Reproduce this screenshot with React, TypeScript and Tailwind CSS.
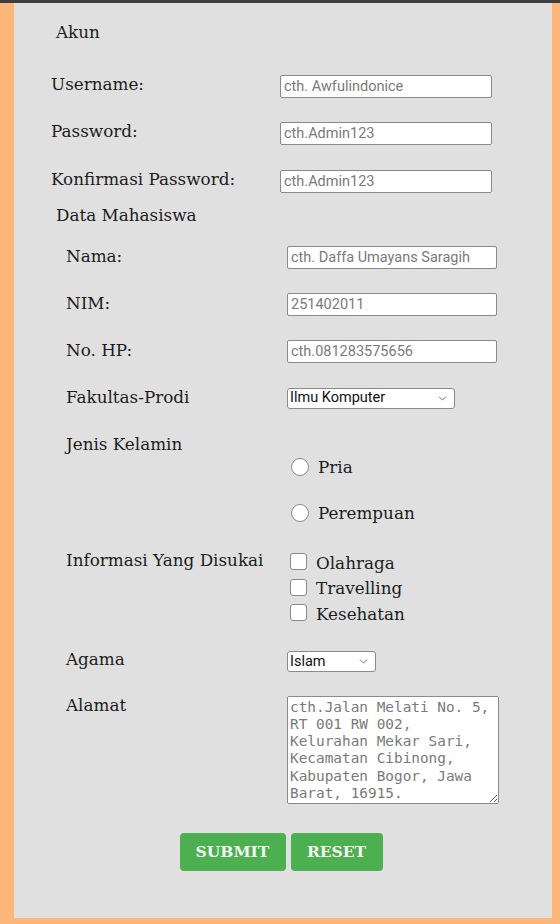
import { ChevronDown } from "lucide-react";

const serif = "font-['DejaVu_Serif','Liberation_Serif',serif]";
const sans = "font-['Roboto','Liberation_Sans',sans-serif]";

function TextInput({ placeholder, wide }: { placeholder: string; wide?: boolean }) {
  return (
    <input
      type="text"
      placeholder={placeholder}
      className={`h-[23px] ${wide ? "w-[212px]" : "w-[210px]"} rounded-[2px] border border-[#8a8a8a] bg-white px-[3px] ${sans} text-[14.5px] text-[#333] outline-none placeholder:text-[#7a7a7a]`}
    />
  );
}

function Select({ value, width }: { value: string; width: string }) {
  return (
    <div
      className={`flex h-[21px] ${width} items-center justify-between rounded-[3px] border border-[#8a8a8a] bg-white pl-[2px] pr-[5px] ${sans} text-[14.5px] text-[#111]`}
    >
      <span>{value}</span>
      <ChevronDown className="h-[13px] w-[13px] text-[#555]" strokeWidth={1.5} />
    </div>
  );
}

function Radio({ label }: { label: string }) {
  return (
    <label className="flex h-[23px] items-center gap-[9px]">
      <span className="h-[18px] w-[18px] rounded-full border border-[#8a8a8a] bg-white" />
      <span className="mt-[1px]">{label}</span>
    </label>
  );
}

function Check({ label }: { label: string }) {
  return (
    <label className="flex h-[25.5px] items-center gap-[9px]">
      <span className="h-[17px] w-[17px] rounded-[3px] border border-[#8a8a8a] bg-white" />
      <span className="mt-[3px]">{label}</span>
    </label>
  );
}

export default function App() {
  return (
    <div className={`min-h-[924px] bg-[#fdb77b] ${serif} text-[16.8px] text-[#1c1c1c]`}>
      <div className="h-[3px] bg-[#3f3f3f]" />
      <div className="pb-[6px] pl-[14px] pr-[8px]">
        <div className="h-[915px] bg-[#e0e0e0]">
          {/* Akun */}
          <div className="flex h-[58px] items-center pl-[42px] pt-[2px]">Akun</div>
          <div className="pl-[37px]">
            {[
              ["Username:", "cth. Awfulindonice", "h-[46px]"],
              ["Password:", "cth.Admin123", "h-[48px]"],
              ["Konfirmasi Password:", "cth.Admin123", "h-[48px]"],
            ].map(([label, ph, h]) => (
              <div key={label} className={`flex ${h} items-center`}>
                <span className="mt-[2px] w-[229px]">{label}</span>
                <div className="mt-[3px]">
                  <TextInput placeholder={ph} wide />
                </div>
              </div>
            ))}
          </div>

          {/* Data Mahasiswa */}
          <div className="flex h-[24px] items-center pl-[42px] pt-[2px]">Data Mahasiswa</div>
          <div className="mt-[5px] pl-[52px]">
            {[
              ["Nama:", "cth. Daffa Umayans Saragih"],
              ["NIM:", "251402011"],
              ["No. HP:", "cth.081283575656"],
            ].map(([label, ph]) => (
              <div key={label} className="flex h-[47px] items-center">
                <span className="mt-[2px] w-[221px]">{label}</span>
                <div className="mt-[3px]">
                  <TextInput placeholder={ph} />
                </div>
              </div>
            ))}
            <div className="flex h-[47px] items-center">
              <span className="mt-[2px] w-[221px]">Fakultas-Prodi</span>
              <div className="mt-[3px]">
                <Select value="Ilmu Komputer" width="w-[168px]" />
              </div>
            </div>

            <div className="flex pt-[13px] leading-[23px]">
              <span className="w-[225px]">Jenis Kelamin</span>
              <div className="pt-[22px]">
                <Radio label="Pria" />
                <div className="h-[23px]" />
                <Radio label="Perempuan" />
              </div>
            </div>

            <div className="mt-[24px] flex leading-[23px]">
              <span className="w-[224px] pt-[1px]">Informasi Yang Disukai</span>
              <div className="mt-[1px]">
                <Check label="Olahraga" />
                <Check label="Travelling" />
                <Check label="Kesehatan" />
              </div>
            </div>

            <div className="mt-[22px] flex items-start leading-[23px]">
              <span className="w-[221px]">Agama</span>
              <div className="mt-[3px]">
                <Select value="Islam" width="w-[89px]" />
              </div>
            </div>

            <div className="mt-[22px] flex items-start leading-[23px]">
              <span className="w-[221px]">Alamat</span>
              <textarea
                placeholder="cth.Jalan Melati No. 5, RT 001 RW 002, Kelurahan Mekar Sari, Kecamatan Cibinong, Kabupaten Bogor, Jawa Barat, 16915."
                className="mt-[2px] h-[108px] w-[212px] rounded-[2px] border border-[#8a8a8a] bg-white px-[2px] py-[2px] font-['DejaVu_Sans_Mono','Liberation_Mono',monospace] text-[14.4px] leading-[17.3px] text-[#333] outline-none placeholder:text-[#7a7a7a]"
              />
            </div>
          </div>

          {/* Buttons */}
          <div className="mt-[29px] flex justify-center gap-[5px] pr-[4px]">
            <button
              type="button"
              className="h-[38px] w-[106px] rounded-[4px] bg-[#4caf50] text-[15.5px] font-bold text-[#f4f4f4]"
            >
              SUBMIT
            </button>
            <button
              type="button"
              className="h-[38px] w-[92px] rounded-[4px] bg-[#4caf50] text-[15.5px] font-bold text-[#f4f4f4]"
            >
              RESET
            </button>
          </div>
        </div>
      </div>
    </div>
  );
}
